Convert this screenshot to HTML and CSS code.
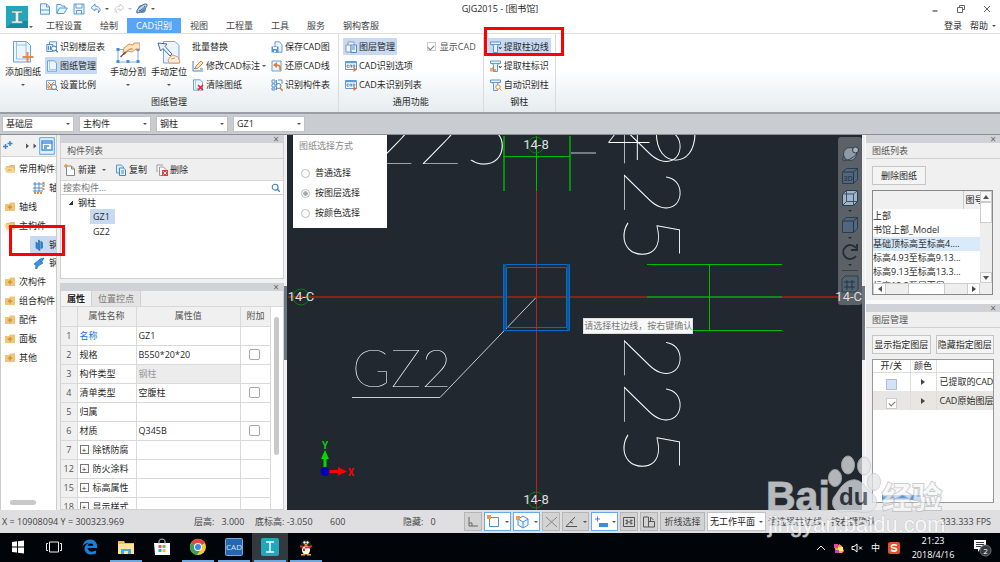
FILE: index.html
```html
<!DOCTYPE html>
<html lang="zh-CN">
<head>
<meta charset="utf-8">
<title>GJG2015 - [图书馆]</title>
<link rel="stylesheet" href="styles.css">
</head>
<body>
<svg class="defs" aria-hidden="true">
  <symbol id="folder" viewBox="0 0 12 10"><path d="M1 9V2h4l1-1.500h5V9z" fill="#f0c479"/><path d="M6 3v4.500M3.800 5.200h4.400" stroke="#c8922e" stroke-width="1.300"/></symbol>
  <symbol id="folder-open" viewBox="0 0 12 10"><path d="M2 8V2h3l1-1h5v7z" fill="#e9bd70"/><path d="M0 3.500h9L11 9H2.500z" fill="#f8d797"/><path d="M3.500 6h4" stroke="#d69e3f"/></symbol>
  <symbol id="cad" viewBox="0 0 12 12"><path d="M.5 1.500h11v8H.5z" fill="#fff" stroke="#5f9bd8"/><path d="M1 2.500h10" stroke="#5f9bd8" stroke-width="1.500"/><path d="M4 5.200H2v2h2M5 7.500V5h1.500v2.500M8 5h1.800v2.200H8z" fill="none" stroke="#3d76b5" stroke-width=".8"/><path d="M8.500 7.500 12 9.500 8.500 12z" fill="#e96a2e"/></symbol>
  <symbol id="column" viewBox="0 0 12 12"><path d="M.5 1h10v2.500H8V5h-.500v6.500H3.500V5H3V3.500H.5z" fill="#e7f2ff" stroke="#4c8dcf" stroke-width=".9"/><path d="M3 3.500h5" stroke="#4c8dcf" stroke-width=".8"/></symbol>
  <symbol id="sheet" viewBox="0 0 12 12"><path d="M1.500.8h6.800l2.200 2.400v8h-9z" fill="#edf5ff" stroke="#629bd5" stroke-width=".9"/><path d="M3.500 1v8.500h7" fill="none" stroke="#9bbfe3" stroke-width=".8"/></symbol>
  <symbol id="lens" viewBox="0 0 12 12"><circle cx="5" cy="5" r="3.500" fill="#fff" stroke="#3f83c8" stroke-width="1.300"/><path d="m7.500 7.500 3 3" stroke="#3f83c8" stroke-width="1.700"/></symbol>
  <symbol id="cube" viewBox="0 0 18 18"><path d="m1.500 5 4-3.500h11v11l-4 4h-11z" fill="#51677e" stroke="#2b3c4c"/><path d="M1.500 5h11v11.500M12.500 5l4-3.500" fill="none" stroke="#253747"/></symbol>
</svg>

<div class="app">
  <header class="top">
    <div class="logo"><svg viewBox="0 0 22 22"><path d="M0 0h22v22H0z" fill="#21a7bb"/><path d="m0 22 7-7h15v7z" fill="#168ca4"/><path d="M5.500 5v2h3.800v8H5.500v2.300h11V15h-3.800V7h3.800V5z" fill="#dff4f3" stroke="#73777c" stroke-width=".7"/></svg><i class="arrow"></i></div>
    <div class="titlerow">
      <div class="quick">
        <button aria-label="新建"><svg viewBox="0 0 12 12"><path d="M1.500.8h6l3 3v7.400h-9zM7.500 1v3h3M1.500 7h9" fill="#eaf4ff" stroke="#5b99d8"/></svg></button>
        <button aria-label="打开"><svg viewBox="0 0 12 12"><path d="M.8 10.500v-9h4l1 1.500h3v2h2.500L8 10.500zM1 10l2.500-5H9" fill="#eaf4ff" stroke="#5b99d8"/></svg></button>
        <button aria-label="保存"><svg viewBox="0 0 12 12"><path d="M1 1h10v10H1zM3 1v4h6V1M3.500 11V7.500h5V11" fill="#eaf4ff" stroke="#5b99d8"/></svg></button>
        <button aria-label="撤销"><svg viewBox="0 0 12 12"><path d="m5 1-4 3.800L5 8V6c3 0 4.500 1 3 4 3-2 3.500-6-3-7z" fill="#eaf4ff" stroke="#5b99d8"/></svg></button><i class="arrow"></i>
        <button aria-label="重做"><svg viewBox="0 0 12 12"><path d="m7 1 4 3.800L7 8V6c-3 0-4.500 1-3 4-3-2-3.500-6 3-7z" fill="#fff" stroke="#ccd0d5"/></svg></button><i class="arrow pale"></i>
        <button aria-label="视图"><svg viewBox="0 0 12 12"><circle cx="6" cy="6" r="4" fill="#648eb9"/><path d="M1 10C-1 6 9-1 11 1.500c1 2-5 8-10 8.500z" fill="#bad2e9" stroke="#3b658f"/><path d="M3 8c3-1 5-3 6-5" stroke="#315c88" fill="none"/></svg></button><i class="arrow"></i>
      </div>
      <h1>GJG2015 - [图书馆]</h1>
      <div class="winbtns">
        <button aria-label="最小化"><svg viewBox="0 0 8 8"><path d="M1.500 6h5" stroke="#555" stroke-width="1.300"/></svg></button>
        <button aria-label="还原"><svg viewBox="0 0 8 8"><path d="M2.500 2.500v-2h5v4h-2M.5 2.500h5v5h-5z" fill="none" stroke="#666"/></svg></button>
        <button aria-label="关闭"><svg viewBox="0 0 8 8"><path d="m1 1 6 6M7 1 1 7" stroke="#666"/></svg></button>
      </div>
    </div>
    <nav class="tabs">
      <button>工程设置</button><button>绘制</button><button class="on">CAD识别</button><button>视图</button><button>工程量</button><button>工具</button><button>服务</button><button>钢构客服</button>
      <span class="account"><a href="#">登录</a><a href="#">帮助</a><i class="arrow"></i></span>
    </nav>
  </header>

  <section class="ribbon">
    <div class="group">
      <div class="tools first">
        <button class="big"><svg viewBox="0 0 22 24"><path d="M1.500 1.500h13l4 4V22h-17z" fill="#edf5ff" stroke="#6aa0d8"/><path d="M4.500 2v17h14M14 2v17M4 5h11" fill="none" stroke="#9cc0e5"/><path d="M15.500 12v10M10.500 17h11" stroke="#e98a42" stroke-width="2"/></svg><span>添加图纸</span><i class="arrow"></i></button>
        <div class="stack">
          <button><svg viewBox="0 0 12 12"><path d="M3.500.8h7v8h-7z" fill="#edf5ff" stroke="#629bd5"/><path d="M.8 3.500h6v7h-6zM2.500 5v4M4.500 5v4" fill="#d9eaff" stroke="#5591d0"/><circle cx="8" cy="7.500" r="2.500" fill="#fff" stroke="#3c7fc5"/><path d="m9.800 9.300 2 2" stroke="#3c7fc5" stroke-width="1.400"/></svg>识别楼层表</button>
          <button class="on"><svg><use href="#sheet"/></svg>图纸管理</button>
          <button><svg viewBox="0 0 12 12"><path d="M.5 1.500h9v9h-9z" fill="#fff0e5" stroke="#71a5d7"/><path d="m2 9 6-6M2 3l3 3M2 5v4h4" stroke="#e47e39" fill="none"/><circle cx="8" cy="8" r="2.500" fill="#fff" stroke="#4484c3"/><path d="m10 10 2 2" stroke="#4484c3"/></svg>设置比例</button>
        </div>
        <button class="big"><svg viewBox="0 0 24 24"><path d="M2 9.500h20V22H2z" fill="none" stroke="#7fb0df"/><path d="M.5 8h3v3h-3zM20.500 8h3v3h-3zM.5 20h3v3h-3zM20.500 20h3v3h-3zM10.500 20h3v3h-3z" fill="#478ed5"/><path d="m7 12 1-4 5-4 4 1 1-2h6v6h-4l-4 3-4-1-4 4z" fill="#fbe3c8" stroke="#dd9150"/><path d="m8 13 6-4 3 0" fill="none" stroke="#c97f3c"/><path d="m4.500 17 5-5" stroke="#555" stroke-width="1.300"/></svg><span>手动分割</span><i class="arrow"></i></button>
        <button class="big"><svg viewBox="0 0 24 24"><path d="M6.500 1.500H18l4 4V23H6.500z" fill="#e9f4ff" stroke="#73a6dc"/><path d="m1 3 9 1-2 2.500 7 7.500-2 2-7-7.500L3.500 11z" fill="#e9f4ff" stroke="#416b9a"/><path d="m13 17 3-2 5 2 2 6H12l-1-3z" fill="#fff0e2" stroke="#e49a59"/><path d="m14 19 4-1" stroke="#e49a59"/></svg><span>手动定位</span><i class="arrow"></i></button>
        <div class="stack">
          <button>批量替换</button>
          <button><svg viewBox="0 0 12 12"><path d="M1 1v10h10M2 9l3-3 2 1 4-5M8 9h3" fill="none" stroke="#4388cc"/><path d="m4 6 5-5 2 2-5 5-3 1z" fill="#ffe5ca" stroke="#dd8339"/></svg>修改CAD标注<i class="arrow"></i></button>
          <button><svg viewBox="0 0 12 12"><use href="#sheet"/><path d="m6 6 5 5m0-5-5 5" stroke="#e22828" stroke-width="1.700"/></svg>清除图纸</button>
        </div>
        <div class="stack">
          <button><svg viewBox="0 0 12 12"><path d="M4 .8h4.500l2.500 3v7.400H4z" fill="#edf5ff" stroke="#629bd5"/><path d="M.5 5.500h7v6h-7z" fill="#4e94d9"/><path d="M2 6h4v2H2zM3 9.500h2v1.500H3z" fill="#fff"/></svg>保存CAD图</button>
          <button><svg viewBox="0 0 12 12"><path d="M1 1h9v10H1z" fill="#edf5ff" stroke="#6ba0d5"/><path d="M9 10c1-4-1-5-4-5" fill="none" stroke="#e77732" stroke-width="1.700"/><path d="M2 5 6 2v6z" fill="#e77732"/></svg>还原CAD线</button>
          <button><svg viewBox="0 0 12 12"><path d="M1 1h3v3H1zM1 5h3v3H1zM1 9h3v2H1zM5.500 1v10M7 1h4v4" fill="none" stroke="#5794d1"/><circle cx="7.500" cy="7" r="2.500" fill="#fff" stroke="#3c7fc5"/><path d="m9 9 3 3" stroke="#e77732" stroke-width="1.500"/></svg>识别构件表</button>
        </div>
      </div>
      <h2>图纸管理</h2>
    </div>
    <div class="group">
      <div class="tools">
        <div class="stack">
          <button class="on"><svg viewBox="0 0 12 12"><path d="M1 4h5v7H1zM3 4V1h6v3" fill="#f4f4f4" stroke="#899bb0"/><path d="M6 4h5.500v7.500H6zM7 6h3M7 8h3" fill="#e7f2ff" stroke="#4b90d5"/></svg>图层管理</button>
          <button><svg><use href="#cad"/></svg>CAD识别选项</button>
          <button><svg><use href="#cad"/></svg>CAD未识别列表</button>
        </div>
        <label class="check"><input type="checkbox" checked>显示CAD</label>
      </div>
      <h2>通用功能</h2>
    </div>
    <div class="group">
      <div class="tools">
        <div class="stack">
          <button class="on"><svg viewBox="0 0 12 12"><use href="#column"/><path d="m9 6 1.200 2L11.500 6" fill="none" stroke="#444"/></svg>提取柱边线</button>
          <button><svg viewBox="0 0 12 12"><use href="#column"/><path d="m9 6 1.200 2L11.500 6" fill="none" stroke="#444"/><path d="M1 11.500V8M3 11.500V7M5 11.500V9" stroke="#e07b31" stroke-width="1.300"/></svg>提取柱标识</button>
          <button><svg viewBox="0 0 12 12"><use href="#column"/><circle cx="8" cy="8" r="2.200" fill="#fff" stroke="#e38a44"/><path d="m9.500 9.500 2 2" stroke="#e38a44"/></svg>自动识别柱</button>
        </div>
      </div>
      <h2>钢柱</h2>
      <div class="redmark ribbonmark"></div>
    </div>
  </section>

  <div class="selectors">
    <span class="combo"><select aria-label="楼层"><option>基础层</option></select><i class="arrow"></i></span>
    <span class="combo"><select aria-label="构件类别"><option>主构件</option></select><i class="arrow"></i></span>
    <span class="combo"><select aria-label="构件类型"><option>钢柱</option></select><i class="arrow"></i></span>
    <span class="combo"><select aria-label="构件"><option>GZ1</option></select><i class="arrow"></i></span>
  </div>

  <main class="work">
    <aside class="nav">
      <div class="navtop">
        <svg viewBox="0 0 36 20"><path d="M2 10.500h5M4.500 8v5M6.500 7.500h5M9 5v5" stroke="#3f88cf" stroke-width="1.500"/><path d="m25 7.500 3 2.500-3 2.500z" fill="#555"/><path d="M32.500 7.500v5l3-2.500z" fill="#555"/></svg>
        <button aria-label="面板视图"><svg viewBox="0 0 16 18"><path d="M.7.700h14.600v16.600H.7z" fill="#e2f0ff" stroke="#5ba5ee"/><path d="M3 4h10v9H3zM3 6h10M5 9h5M5 11h3" fill="#fff" stroke="#3f91df" stroke-width="1.400"/></svg></button>
      </div>
      <ul>
        <li><svg><use href="#folder-open"/></svg>常用构件类型</li>
        <li class="sub"><svg viewBox="0 0 12 12"><path d="M2 0v10M6 0v10M0 2h12M0 6h10M0 9h10" stroke="#4b8dcc"/><path d="M10.500 0v9M1 11h9" stroke="#df8a48" stroke-width="2" stroke-dasharray="2 1"/></svg>轴网</li>
        <li><svg><use href="#folder"/></svg>轴线</li>
        <li><svg><use href="#folder-open"/></svg>主构件</li>
        <li class="sub on"><svg viewBox="0 0 12 12"><path d="m3 3 1.500 1v6L3 9zM5.500 1 7 2v9.500L5.500 11zM8 2.500l1.500 1V9L8 9.500z" fill="#378bd9" stroke="#236db2" stroke-width=".7"/></svg>钢柱</li>
        <li class="sub"><svg viewBox="0 0 12 12"><path d="m1 7 6-5 4-1-2 3.500H7.500L10 6l-5 3-1 2.500H2.500L3 8.500z" fill="#3695e7" stroke="#236db2" stroke-width=".7"/></svg>钢梁</li>
        <li><svg><use href="#folder"/></svg>次构件</li>
        <li><svg><use href="#folder"/></svg>组合构件</li>
        <li><svg><use href="#folder"/></svg>配件</li>
        <li><svg><use href="#folder"/></svg>面板</li>
        <li><svg><use href="#folder"/></svg>其他</li>
      </ul>
      <div class="hthumb"></div>
      <div class="redmark navmark"></div>
    </aside>

    <div class="side">
      <section class="panel">
        <div class="strip"><button aria-label="关闭">×</button></div>
        <h3>构件列表</h3>
        <div class="actions">
          <button><svg viewBox="0 0 12 12"><path d="M2.500 2h5l3 3v6.500h-8zM7.500 2v3h3" fill="#fff" stroke="#888"/><path d="M2 0v4M0 2h4" stroke="#e99842" stroke-width="1.300"/></svg>新建<i class="arrow"></i></button>
          <button><svg viewBox="0 0 12 12"><path d="M1.500 1h5l2 2v6h-7z" fill="#d8eaff" stroke="#5a98d5"/><path d="M4.500 4h4l2 2v5.500h-6zM6 7h3M6 9h3" fill="#edf6ff" stroke="#3f87cf"/></svg>复制</button>
          <button><svg viewBox="0 0 12 12"><path d="M1 8V1h6M3.500 3h4l3 3v5.500h-7z" fill="#fff" stroke="#999"/><path d="M6 6h6v6H6z" fill="#e0403f"/><path d="m7.500 7.500 3 3m0-3-3 3" stroke="#fff"/></svg>删除</button>
        </div>
        <div class="search"><input type="text" placeholder="搜索构件..." aria-label="搜索构件"><svg><use href="#lens"/></svg></div>
        <ul class="tree"><li><i class="open"></i>钢柱<ul><li><span class="on">GZ1</span></li><li><span>GZ2</span></li></ul></li></ul>
      </section>
      <section class="panel">
        <div class="strip"><button aria-label="关闭">×</button></div>
        <div class="proptabs"><button class="on">属性</button><button>位置控点</button></div>
        <div class="propbody">
          <table class="props">
            <colgroup><col class="c1"><col class="c2"><col><col class="c4"></colgroup>
            <thead><tr><th></th><th>属性名称</th><th>属性值</th><th>附加</th></tr></thead>
            <tbody>
              <tr><th>1</th><td class="blue">名称</td><td>GZ1</td><td></td></tr>
              <tr><th>2</th><td>规格</td><td>B550*20*20</td><td><input type="checkbox" aria-label="规格附加"></td></tr>
              <tr><th>3</th><td>构件类型</td><td class="locked">钢柱</td><td></td></tr>
              <tr><th>4</th><td>清单类型</td><td>空腹柱</td><td><input type="checkbox" aria-label="清单类型附加"></td></tr>
              <tr><th>5</th><td>归属</td><td></td><td></td></tr>
              <tr><th>6</th><td>材质</td><td>Q345B</td><td><input type="checkbox" aria-label="材质附加"></td></tr>
              <tr><th>7</th><td><button class="plus">+</button>除锈防腐</td><td></td><td></td></tr>
              <tr><th>12</th><td><button class="plus">+</button>防火涂料</td><td></td><td></td></tr>
              <tr><th>15</th><td><button class="plus">+</button>标高属性</td><td></td><td></td></tr>
              <tr><th>18</th><td><button class="plus">+</button>显示样式</td><td></td><td></td></tr>
            </tbody>
          </table>
          <div class="vthumb"></div>
        </div>
      </section>
    </div>
    <div class="splitter"><i></i></div>

    <section class="canvas">
      <svg class="drawing" viewBox="287 135 575 375" preserveAspectRatio="xMidYMid slice">
        <g class="cadbig">
          <text x="371" y="164">225</text>
          <text x="606" y="160">40</text>
          <text transform="translate(624 123) rotate(90)">225</text>
          <text transform="translate(624 335) rotate(90)">225</text>
          <text class="mid" x="352" y="387">GZ2</text>
        </g>
        <path class="line white" d="M570 153h26M352 397.500h88L536.500 297"/>
        <path class="line red wide-line" d="M288 297H862"/>
        <path class="line red" d="M536.500 190V510"/>
        <path class="line green wide-line" d="M504 136v55M570 136v55M647 297h135"/>
        <path class="line green" d="M536.500 136v55M503 156.500h67M647 264.500h135M647 330.500h135M709.500 264v66"/>
        <path class="line blue-edge" d="M503.500 264.500h66v66h-66zM506.500 267.500h60v60h-60z"/>
        <path class="line blue-side" d="M505 264v66M568 264v66"/>
        <g class="axis"><circle cx="536" cy="145" r="8"/><circle cx="301" cy="297" r="8"/><circle cx="848" cy="297" r="8"/><circle cx="536" cy="500" r="8"/></g>
        <g class="axistext"><text x="536" y="149">14-8</text><text x="301" y="301">14-C</text><text x="536" y="504">14-8</text></g>
        <path d="M325 471v-14" stroke="#00d900" stroke-width="3"/><path d="m321 459 4-9 4 9z" fill="#00d900"/><path d="M325 471.500h14" stroke="#f00" stroke-width="3"/><path d="m338 467 9 4.500-9 4z" fill="#f00"/><circle cx="325" cy="471.500" r="4.500" fill="#0000b5"/>
        <text class="ucs gy" x="325" y="449">Y</text><text class="ucs gx" x="351" y="476">X</text>
      </svg>
      <fieldset class="mode">
        <legend>图纸选择方式</legend>
        <label><input type="radio" name="mode">普通选择</label>
        <label><input type="radio" name="mode" checked>按图层选择</label>
        <label><input type="radio" name="mode">按颜色选择</label>
      </fieldset>
      <div class="hint">请选择柱边线，按右键确认</div>
      <div class="viewbar">
        <button aria-label="动态观察"><svg viewBox="0 0 18 18"><circle cx="9" cy="9" r="6.500" fill="#8d9aa7" stroke="#39434d"/><path d="M3 11C-1 16 3 17 9 14c6-3 10-8 7-10" fill="none" stroke="#39434d"/><circle cx="14.500" cy="5" r="3" fill="#a5b2bf" stroke="#303942"/></svg></button>
        <button aria-label="三维"><svg viewBox="0 0 18 18"><use href="#cube"/><text x="7" y="14" font-size="7" text-anchor="middle" fill="#1d2a37">3D</text></svg></button>
        <button aria-label="正面"><svg viewBox="0 0 18 18"><path d="m1.500 5 4-3.500h11v11l-4 4h-11z" fill="#9fb4c9" stroke="#2b3c4c"/><path d="M1.500 5h11v11.500M12.500 5l4-3.500M5.500 1.500v11h11M5.500 12.500l-4 4" fill="none" stroke="#3b5168"/></svg><i class="arrow"></i></button>
        <button aria-label="实体"><svg viewBox="0 0 18 18"><use href="#cube"/></svg><i class="arrow"></i></button>
        <button aria-label="旋转"><svg viewBox="0 0 18 18"><path d="M15 5a7 7 0 1 0 0 8M16 1v6h-6" fill="none" stroke="#252c33" stroke-width="1.800"/></svg><i class="arrow"></i></button>
        <hr>
        <button aria-label="网格"><svg viewBox="0 0 18 18"><path d="M1 4 4 1h13v13l-3 3H1z" fill="#526372" stroke="#303e49"/><path d="M3 7h11M3 12h11M6 5v10M11 5v10" stroke="#273440"/></svg></button>
      </div>
      <span class="edgelabel">14-C</span>
    </section>
    <div class="splitter"><i></i></div>

    <aside class="right">
      <section class="rpanel">
        <div class="strip"><button aria-label="关闭">×</button></div>
        <h3>图纸列表</h3>
        <div class="rbtns"><button>删除图纸</button></div>
        <div class="sheetbox">
          <table class="sheets">
            <thead><tr><th></th><th>图号</th></tr></thead>
            <tbody>
              <tr><td colspan="2">上部</td></tr>
              <tr><td colspan="2">书馆上部_Model</td></tr>
              <tr class="on"><td colspan="2">基础顶标高至标高4....</td></tr>
              <tr><td colspan="2">标高4.93至标高9.13...</td></tr>
              <tr><td colspan="2">标高9.13至标高13.3...</td></tr>
              <tr><td colspan="2">标高13.3至屋面层</td></tr>
            </tbody>
          </table>
          <div class="vbar"><button aria-label="向上"><i class="tri up"></i></button><b></b><span></span><button aria-label="向下"><i class="tri down"></i></button></div>
          <div class="hbar"><button aria-label="向左"><i class="tri left"></i></button><span></span><b></b><span></span><button aria-label="向右"><i class="tri rightward"></i></button></div>
        </div>
      </section>
      <section class="rpanel">
        <div class="strip"><button aria-label="关闭">×</button></div>
        <h3>图层管理</h3>
        <div class="rbtns"><button>显示指定图层</button><button>隐藏指定图层</button></div>
        <div class="layerbox">
          <table class="layers">
            <thead><tr><th>开/关</th><th>颜色</th><th></th></tr></thead>
            <tbody>
              <tr><td><input type="checkbox" class="tint" aria-label="已提取的CAD图层"></td><td><i class="tri rightward"></i></td><td>已提取的CAD图层</td></tr>
              <tr class="on"><td><input type="checkbox" checked aria-label="CAD原始图层"></td><td><i class="tri rightward"></i></td><td>CAD原始图层</td></tr>
            </tbody>
          </table>
          <div class="layerthumb"></div>
        </div>
      </section>
    </aside>
  </main>

  <footer class="status">
    <span>X = 10908094 Y = 300323.969</span><span>层高:&nbsp;&nbsp; 3.000</span><span>底标高: -3.050</span><span>600</span><span>隐藏:&nbsp;&nbsp; 0</span>
    <div class="snaps">
      <button aria-label="正交"><svg viewBox="0 0 16 16"><path d="M4 3v9h9M4 9h3v3" fill="none" stroke="#666"/></svg></button>
      <button class="on wide" aria-label="选择框"><svg viewBox="0 0 16 16"><path d="M3.500 3.500h9v9h-9z" fill="#fff" stroke="#4c91d5"/><path d="M1 1h4v4H1z" fill="#ed994f"/></svg><i class="arrow"></i></button>
      <button class="on wide" aria-label="三维捕捉"><svg viewBox="0 0 16 16"><path d="m3 5 5-3 5 3v6l-5 3-5-3zM3 5l5 3 5-3M8 8v6" fill="#eef6ff" stroke="#4c91d5"/><path d="M1 2h4v4H1z" fill="#ed994f"/></svg><i class="arrow"></i></button>
      <button aria-label="交点"><svg viewBox="0 0 16 16"><path d="m3 3 11 10M14 3 3 13" stroke="#888"/></svg></button>
      <button class="wide" aria-label="角度"><svg viewBox="0 0 16 16"><path d="M13 12.500H2L11 3M6 8l3 1" fill="none" stroke="#555"/></svg><i class="arrow"></i></button>
      <button class="on wide" aria-label="坐标输入"><svg viewBox="0 0 16 16"><path d="M2 5h5M4.500 2.500v5" stroke="#438bd3"/><path d="M6 9h9v4H6z" fill="#438bd3"/></svg><i class="arrow"></i></button>
      <button aria-label="轴网显示"><svg viewBox="0 0 16 16"><path d="M2.500 3.500h11v9h-11zM6 5.500v5M10 5.500v5M4.500 6.500h2M9.500 6.500h2M6 8h4M4.500 9.500h2M9.500 9.500h2" fill="none" stroke="#555"/></svg></button>
      <button aria-label="翻转"><svg viewBox="0 0 16 16"><path d="M2.500 3h5v10h-5zM7.500 7.500h6V13h-6M9.500 7V3l3 3" fill="none" stroke="#555"/></svg></button>
      <button class="word">折线选择</button>
      <span class="combo"><select aria-label="工作平面"><option>无工作平面</option></select><i class="arrow"></i></span>
    </div>
    <span class="prompt">请选择柱边线，按右键确认</span>
    <span class="fps">333.333 FPS</span>
  </footer>

  <footer class="taskbar">
    <button aria-label="开始"><svg viewBox="0 0 18 18"><path d="m3 4 5-.7v5.200H3zM9 3.200l6-.8v6.100H9zM3 9.500h5v5L3 14zM9 9.500h6v6l-6-.8z" fill="#fff"/></svg></button>
    <button aria-label="任务视图"><svg viewBox="0 0 18 18"><path d="M4.500 4h9v10h-9zM3 5.500H1.500v7H3M15 5.500h1.500v7H15" fill="none" stroke="#eee"/></svg></button>
    <button aria-label="Edge"><svg viewBox="0 0 18 18"><path d="M1.500 9C2 4 5.500 1 9.500 1.500c5 .4 7 4 6.800 8.500H6.500c.5 4 5 4.500 8.500 2.500v3C9 18 4 16 3.500 11 3.500 8 5 6 8 5 4 5 2.500 7 1.500 9z" fill="#1682dc"/><path d="M6.700 7.800c.3-3 5.500-3.300 5.700 0z" fill="#02050a"/></svg></button>
    <button class="run" aria-label="文件资源管理器"><svg viewBox="0 0 18 18"><path d="M1 3h6l1 2h9v11H1z" fill="#ebbe57"/><path d="M1 6h16v10H1z" fill="#ffe399"/><path d="M4 16v-5h10v5h-3v-3H7v3z" fill="#49a9dd"/></svg></button>
    <button aria-label="应用商店"><svg viewBox="0 0 18 18"><path d="M1 5h16v12H2z" fill="#fff"/><path d="M6 6V3c0-2.500 6-2.500 6 0v3" fill="none" stroke="#ccc"/><path d="M5.500 7h3v3h-3z" fill="#e54"/><path d="M9.500 7h3v3h-3z" fill="#7b3"/><path d="M5.500 11h3v3h-3z" fill="#2ae"/><path d="M9.500 11h3v3h-3z" fill="#fb2"/></svg></button>
    <button class="run" aria-label="Chrome"><svg viewBox="0 0 18 18"><circle cx="9" cy="9" r="8" fill="#f5ca32"/><path d="M9 9 2 5a8 8 0 0 1 14 0z" fill="#e14b3d"/><path d="M9 9 2 5a8 8 0 0 0 6 12l4-6z" fill="#3da350"/><circle cx="9" cy="9" r="4" fill="#fff"/><circle cx="9" cy="9" r="3" fill="#4385e5"/></svg></button>
    <button class="run" aria-label="广联达CAD"><svg viewBox="0 0 18 18"><rect x=".5" y=".5" width="17" height="17" rx="1" fill="#2467ad" stroke="#75a9df"/><text x="9" y="12" font-size="8" text-anchor="middle" fill="#cde6ff">CAD</text></svg></button>
    <button class="run current" aria-label="GJG2015"><svg viewBox="0 0 18 18"><rect width="18" height="18" rx="2" fill="#22a6ba"/><path d="M5 4h8M9 4v10M5 14h8" stroke="#e7ffff" stroke-width="1.500"/></svg></button>
    <button class="run" aria-label="QQ"><svg viewBox="0 0 18 18"><ellipse cx="9" cy="10" rx="5" ry="6" fill="#222"/><ellipse cx="9" cy="12" rx="4" ry="4.500" fill="#fff"/><path d="M4 7C3 0 15 0 14 7z" fill="#222"/><circle cx="7.500" cy="4.500" r="1.200" fill="#fff"/><circle cx="10.500" cy="4.500" r="1.200" fill="#fff"/><path d="M3 7c4 2 8 2 12 0v2c-4 2-8 2-12 0zM6 9v4h2V9" fill="#e32d28"/><path d="M7 6h4l-2 1.500zM4 16h4v1.500H4zM10 16h4v1.500h-4z" fill="#f4a526"/></svg></button>
    <div class="tray">
      <svg viewBox="0 0 12 12"><path d="m2 8 4-4 4 4" fill="none" stroke="#fff"/></svg>
      <svg viewBox="0 0 12 12"><path d="m1 3 4 1 1-2 3 2 2 5-2 2H3z" fill="#f4a441"/><path d="M1 2h4v4H1z" fill="#e8498a"/><path d="M5 5h5v4H5z" fill="#ffe680"/><path d="M2 8h4v3H2z" fill="#bd42c3"/></svg>
      <svg viewBox="0 0 12 12"><path d="M1 4.500h2L6 2v8L3 7.500H1zM8 4.500l3 3m0-3-3 3" fill="none" stroke="#fff"/></svg>
      <span>中</span>
      <svg viewBox="0 0 12 12"><rect width="12" height="12" rx="2" fill="#eb4e25"/><path d="M9 3.500C6 2 3 3 3.500 5c.5 1.500 5 .5 5 2.500C8.500 9.500 5 9.500 3 8" fill="none" stroke="#fff" stroke-width="1.700"/></svg>
    </div>
    <time>21:23<br>2018/4/16</time>
    <button class="notice" aria-label="通知"><svg viewBox="0 0 20 20"><path d="M2 3h12v9H8l-2 3v-3H2z" fill="#fff"/><path d="M4 5.500h8M4 7.500h8M4 9.500h5" stroke="#333"/><circle cx="13.500" cy="13.500" r="5.500" fill="#343a40" stroke="#777"/><text x="13.500" y="16.500" text-anchor="middle" font-size="8" fill="#fff">2</text></svg></button>
  </footer>

  <div class="watermark">
    <svg viewBox="0 0 186 104">
      <text class="wmlatin" x="-2" y="76">Bai</text>
      <g class="paw">
        <ellipse cx="67" cy="44" rx="6.500" ry="8.500"/><ellipse cx="80" cy="31" rx="6.500" ry="9"/><ellipse cx="96" cy="32" rx="6.500" ry="9"/><ellipse cx="106" cy="48" rx="6.500" ry="8.500"/>
        <path d="M84 46c10-2 13 9 20 13 8 7 5 18-4 19-8 1-17-2-24 0-10 1-14-8-10-15 5-6 8-15 18-17z"/>
      </g>
      <text class="wmdu" x="71" y="71">du</text>
      <text class="wmcjk" x="114" y="74">经验</text>
      <text class="wmurl" x="0" y="98">jingyan.baidu.com</text>
    </svg>
  </div>
</div>
</body>
</html>
```
FILE: styles.css
```css
* { box-sizing: border-box; }
body { margin: 0; font: 9px/12px "Open Sans", "Noto Sans CJK SC", sans-serif; color: #292929; }
button, input, select { font: inherit; color: inherit; margin: 0; }
button { border: 0; padding: 0; background: none; white-space: nowrap; display: flex; align-items: center; }
svg { display: block; flex: none; width: 12px; height: 12px; }
h1, h2, h3, ul { margin: 0; padding: 0; font-size: 9px; font-weight: 400; list-style: none; }
a { color: inherit; text-decoration: none; }
table { border-collapse: collapse; table-layout: fixed; width: 100%; }
th { font-weight: 400; }
th, td { padding: 0; white-space: nowrap; overflow: hidden; }
.defs { position: absolute; width: 0; height: 0; }
.app { position: relative; display: flex; flex-direction: column; height: 100vh; overflow: hidden; background: #f0f0f0; }
.arrow { flex: none; width: 0; height: 0; border: 2px solid transparent; border-top-color: #555; border-bottom: 0; }
.pale { border-top-color: #bbb; }

.top { display: grid; grid-template-columns: 37px 1fr; grid-template-rows: 18px 15px; background: #fff; flex: none; }
.logo { grid-row: 1 / 3; display: flex; align-items: flex-end; gap: 1px; padding: 0 0 5px 6px; }
.logo svg { width: 22px; height: 22px; }
.titlerow { display: grid; grid-template-columns: 1fr auto 1fr; align-items: center; }
.titlerow h1 { margin-right: 37px; }
.quick { display: flex; align-items: center; gap: 5px; padding-left: 2px; }
.quick .arrow { margin: 0 -1px 0 -2px; }
.winbtns { display: flex; justify-content: flex-end; gap: 18px; padding-right: 9px; }
.winbtns svg { width: 8px; height: 8px; }
.tabs { display: flex; }
.tabs button { padding: 0 9px; color: #444; }
.tabs button.on { background: #57a5f5; color: #fff; }
.account { margin-left: auto; display: flex; align-items: center; gap: 8px; padding-right: 4px; }
.account .arrow { margin-left: -4px; }

.ribbon { display: flex; flex: none; height: 81px; border-top: 1px solid #ddd; border-bottom: 2px solid #989ea3; background: linear-gradient(#fff 45%, #e6ecef); }
.group { position: relative; padding: 3px 4px 0; border-right: 1px solid #d9dcdf; }
.group h2 { text-align: center; line-height: 16px; }
.tools { display: flex; gap: 3px; }
.first { padding-right: 3px; }
.big { flex-direction: column; padding: 3px 0 0; width: 38px; }
.big svg { width: 24px; height: 24px; }
.big span { line-height: 16px; }
.big .arrow { margin-top: 4px; }
.stack { display: grid; grid-template-rows: repeat(3, 19px); align-items: center; justify-items: start; }
.stack button { gap: 2px; height: 17px; padding: 0 2px; }
.first .stack button { padding: 0 1px; }
.on { background: #c7daf1; }
.check { display: flex; align-items: center; gap: 4px; height: 19px; margin-right: 3px; color: #555; }
input[type=checkbox] { appearance: none; width: 11px; height: 11px; border: 1px solid #a8a8a8; background: #fff; display: grid; place-items: center; }
input[type=checkbox]:checked::before { content: ""; width: 5px; height: 3px; border: solid #777; border-width: 0 0 1px 1px; transform: rotate(-45deg); }
.check input[type=checkbox] { width: 9px; height: 9px; border-color: #ccc; }
.redmark { position: absolute; border: 3px solid #f00; pointer-events: none; z-index: 4; }
.ribbonmark { left: 0; right: -9px; top: -7px; height: 29px; }

.selectors { display: flex; flex: none; gap: 5px; height: 21px; padding: 2px; background: #c9ccd1; border-bottom: 1px solid #8c9095; }
.combo { display: grid; width: 72px; align-items: center; }
.combo select { grid-area: 1 / 1; appearance: none; width: 100%; height: 16px; padding: 0 3px; border: 1px solid #c0c3c8; border-radius: 0; background: #fff; line-height: 12px; }
.combo .arrow { grid-area: 1 / 1; justify-self: end; margin-right: 4px; pointer-events: none; }

.work { flex: 1; min-height: 0; display: grid; grid-template-columns: 57px 227px 3px minmax(0, 1fr) 3px 135px; grid-template-rows: minmax(0, 1fr); }
.nav { position: relative; display: flex; flex-direction: column; background: #fff; border: solid #ccc; border-width: 0 1px; min-height: 0; }
.navtop { display: flex; align-items: center; justify-content: space-between; height: 22px; flex: none; background: #f1f1f1; border-bottom: 1px solid #d4d4d4; padding-right: 1px; }
.navtop > svg { width: 36px; height: 20px; }
.navtop button svg { width: 16px; height: 18px; }
.nav ul { flex: 1; overflow: hidden; padding-top: 2px; }
.nav li { display: flex; align-items: center; gap: 3px; height: 19px; padding-left: 3px; white-space: nowrap; overflow: hidden; }
.nav .sub { margin: 1px 0 1px 29px; height: 17px; gap: 4px; }
.hthumb { width: 26px; height: 5px; margin: 0 0 5px 9px; border-radius: 3px; background: #c8c8c8; }
.navmark { left: 8px; width: 56px; top: 90px; height: 31px; }

.side { display: grid; grid-template-rows: minmax(0, 144fr) minmax(0, 227fr); gap: 4px; padding-left: 3px; background: #f0f0f0; }
.panel { display: flex; flex-direction: column; overflow: hidden; background: #fff; border: 1px solid #d0d0d0; border-top: 0; }
.strip { display: flex; justify-content: flex-end; height: 8px; flex: none; background: #d1d2d7; }
.strip button { font-size: 10px; line-height: 8px; padding-right: 4px; color: #666; }
h3 { flex: none; height: 16px; line-height: 16px; padding-left: 6px; color: #555; background: #efefef; border-bottom: 1px solid #d0d0d0; }
.actions { display: flex; flex: none; gap: 9px; height: 22px; padding-left: 3px; background: #efefef; border-bottom: 1px solid #d8d8d8; }
.actions button { gap: 2px; }
.actions .arrow { margin-left: 4px; }
.search { display: flex; align-items: center; flex: none; height: 14px; border-bottom: 1px solid #d0d0d0; padding-right: 2px; }
.search input { flex: 1; min-width: 0; height: 12px; padding: 0 2px; border: 0; background: none; }
.search input::placeholder { color: #777; }
.search svg { width: 10px; height: 10px; }
.tree { padding: 2px 0 0 7px; line-height: 12px; }
.open { display: inline-block; width: 5px; height: 5px; margin: 0 5px 1px 0; background: linear-gradient(135deg, transparent 50%, #333 50%); }
.tree ul { padding-left: 22px; }
.tree li li { line-height: 15px; }
.tree span { display: inline-block; padding: 0 5px 0 3px; }

.proptabs { display: flex; flex: none; height: 16px; background: #efefef; border-bottom: 1px solid #d8d8d8; }
.proptabs button { padding: 0 6px; color: #777; background: #e4e4e4; border-right: 1px solid #d0d0d0; }
.proptabs .on { background: #f4f4f4; color: #222; font-weight: 700; }
.propbody { display: flex; min-height: 0; overflow: hidden; }
.props { flex: 1; width: 0; align-self: flex-start; }
.c1 { width: 16px; } .c2 { width: 59px; } .c4 { width: 30px; }
.props tr { height: 19px; }
.props th, .props td { border: solid #d9d9d9; border-width: 0 1px 1px 0; height: 19px; }
.props th { background: #f0f0f0; color: #555; }
.props td { padding-left: 2px; }
.props td:nth-child(4) { padding: 0 8px; }
.props td input { border-radius: 2px; }
.props .blue { color: #1672dd; }
.props .locked { background: #ececec; color: #999; }
.plus { display: inline-grid; place-items: center; width: 9px; height: 9px; margin-right: 4px; border: 1px solid #777; line-height: 7px; font-size: 8px; }
.vthumb { width: 5px; height: 138px; margin: 10px 4px 0 3px; border-radius: 3px; background: #c9c9c9; }

.splitter { display: grid; align-items: center; background: #f0f0f0; }
.splitter i { height: 74px; background: #6d7680; }

.canvas { position: relative; overflow: hidden; background: #212830; }
.drawing { width: 100%; height: 100%; }
.cadbig { font-family: Lato, sans-serif; font-weight: 100; font-size: 80px; fill: #fff; }
.cadbig .mid { font-size: 52px; }
.line { fill: none; }
.white { stroke: #c9ccd0; }
.red { stroke: #b5231c; }
.green { stroke: #0b0; }
.wide-line { stroke-width: 2px; }
.red.wide-line { stroke: #86241c; }
.green.wide-line { stroke: #0a8c12; }
.blue-edge { stroke: #0869c8; }
.blue-side { stroke-width: 2px; stroke: #0757a5; }
.axis { fill: none; stroke: #087d16; }
.axistext { font: 13px Roboto, sans-serif; fill: #ddd; text-anchor: middle; }
.ucs { font: 700 10px Roboto, sans-serif; text-anchor: middle; }
.gy { fill: #00d900; }
.gx { fill: #f00; }
.mode { position: absolute; left: 6px; top: 0; width: 94px; margin: 0; padding: 5px 6px 5px; border: 0; background: #fff; }
.mode legend { float: left; width: 100%; padding: 0; line-height: 12px; color: #888; margin-bottom: 11px; }
.mode label { display: flex; clear: both; align-items: center; gap: 5px; height: 20px; padding-left: 2px; }
.mode input { appearance: none; width: 9px; height: 9px; border: 1px solid #bbb; border-radius: 50%; background: #fff; }
.mode input:checked { background: radial-gradient(#aaa 40%, #fff 50%); }
.hint { position: absolute; left: 51.5%; top: 183px; padding: 1px 0; background: #f8f8f8; border: 1px solid #ddd; color: #777; white-space: nowrap; }
.viewbar { position: absolute; right: 0; top: 2px; width: 24px; display: flex; flex-direction: column; align-items: center; gap: 4px; height: 168px; padding: 8px 0 0; background: #5c6167; border-radius: 3px; }
.viewbar button { flex-direction: column; gap: 3px; }
.viewbar svg { width: 18px; height: 18px; }
.viewbar .arrow { border-top-color: #252b30; }
.viewbar hr { width: 16px; margin: 0; border: 0; border-top: 1px solid #3d4145; }
.edgelabel { position: absolute; right: 0; top: 155px; font: 13px/14px Roboto, sans-serif; color: #ddd; }

.right { display: grid; grid-template-rows: minmax(0, 165fr) minmax(0, 206fr); gap: 4px; padding-left: 1px; background: #fafafa; }
.rpanel { display: flex; flex-direction: column; overflow: hidden; background: #f0f0f0; }
.rbtns { display: flex; flex: none; gap: 5px; padding: 7px 6px 5px; }
.rbtns button { justify-content: center; flex: 0 1 auto; min-width: 54px; height: 19px; padding: 0 2px; border: 1px solid #c5c5c5; background: #f4f4f4; }
.sheetbox { display: grid; grid-template-columns: 1fr 12px; grid-template-rows: 1fr 11px; margin: 0 7px 5px 6px; border: 1px solid #888; height: 105px; overflow: hidden; background: #eee; }
.sheets { overflow: hidden; height: 92px; display: block; background: #fff; }
.sheets thead, .sheets tbody { display: table; width: 108px; table-layout: fixed; }
.sheets th { height: 18px; background: #f0f0f0; }
.sheets th:last-child { width: 18px; border-left: 1px solid #ccc; padding-left: 2px; }
.sheets td { height: 14px; line-height: 14px; }
.sheets .on { background: #d9eafa; }
.vbar { display: flex; flex-direction: column; }
.vbar button { justify-content: center; height: 11px; border: 1px solid #ccc; background: #f8f8f8; }
.vbar b { height: 21px; background: #fff; border: 1px solid #ccc; }
.vbar span, .hbar span { flex: 1; }
.hbar { display: flex; border-top: 1px solid #ccc; }
.hbar button { width: 13px; justify-content: center; background: #fff; border: 1px solid #ccc; border-width: 0 1px; }
.hbar b { width: 37px; background: #fff; border: solid #ccc; border-width: 0 1px; }
.tri { display: inline-block; width: 0; height: 0; border: 3px solid transparent; }
.up { border-bottom: 4px solid #555; border-top: 0; }
.down { border-top: 4px solid #555; border-bottom: 0; }
.left { border-right: 4px solid #555; border-left: 0; }
.rightward { border-left: 4px solid #444; border-right: 0; }
.layerbox { display: flex; flex-direction: column; flex: 1; margin: 0 6px 7px; border: 1px solid #999; background: #fff; overflow: hidden; }
.layers { background: #fff; }
.layers th { height: 12px; line-height: 11px; border-bottom: 1px solid #ddd; }
.layers th:nth-child(1) { width: 37px; }
.layers th:nth-child(2) { width: 26px; }
.layers th + th, .layers td + td { border-left: 1px solid #ddd; }
.layers td { height: 19px; text-align: center; }
.layers td:first-child { padding: 5px 13px 0; }
.layers td:last-child { text-align: left; padding-left: 3px; }
.layers .on { background: #e8e6e2; }
.layers input { border-color: #ccc; }
.layers .tint { background: #d5e1f4; border-color: #aabfdd; }
.layerthumb { margin: auto 0 2px 9px; width: 39px; height: 5px; background: #4f91dd; }

.status { display: grid; grid-template-columns: 192px 61px 75px 73px 61px auto auto 1fr; align-items: center; flex: none; height: 23px; padding-left: 2px; background: #dfdfe1; white-space: nowrap; color: #444; }
.snaps { display: flex; gap: 2px; }
.snaps button { justify-content: center; width: 18px; height: 19px; border: 1px solid #b5b5b5; background: #d3d3d4; }
.snaps svg { width: 16px; height: 16px; }
.snaps .wide { width: 27px; gap: 3px; }
.snaps .on { border-color: #67a9ef; background: #fff; }
.snaps .word { width: 45px; }
.snaps .combo { width: 59px; }
.snaps .combo select { height: 19px; padding: 0 2px; color: #222; }
.snaps .combo .arrow { margin-right: 3px; }
.prompt { padding-left: 2px; }
.fps { justify-self: end; padding-right: 9px; }

.taskbar { display: flex; align-items: center; flex: none; height: 29px; background: #010408; color: #fff; }
.taskbar > button { justify-content: center; width: 36px; height: 29px; border-bottom: 2px solid transparent; }
.taskbar svg { width: 18px; height: 18px; }
.taskbar .run { border-image: linear-gradient(90deg, transparent 10%, #6da7df 10% 90%, transparent 90%) 2; }
.taskbar .current { background: #34393e; }
.taskbar .tray { display: flex; align-items: center; gap: 6px; margin-left: auto; }
.taskbar .tray svg { width: 12px; height: 12px; }
.tray span { padding: 0 2px; }
time { width: 66px; text-align: center; line-height: 14px; }
.taskbar > .notice { width: 32px; margin-right: 2px; }
.taskbar .notice svg { width: 20px; height: 20px; }

.watermark { position: absolute; right: 46px; bottom: 24px; pointer-events: none; }
.watermark svg { width: 186px; height: 104px; overflow: visible; opacity: .75; }
.wmlatin { font: 700 41px "Liberation Sans", sans-serif; fill: #e9ebed; stroke: #c4c7ca; stroke-width: 1px; paint-order: stroke; }
.paw { fill: #e3e5e8; stroke: #c4c7ca; }
.wmcjk { font: 700 30px "Noto Sans CJK SC", sans-serif; fill: #f6f6f6; stroke: #b9bcc0; stroke-width: 2px; paint-order: stroke; }
.wmurl { font: 22px "Liberation Sans", sans-serif; fill: #fff; stroke: #c2c4c8; stroke-width: 1px; paint-order: stroke; }
.wmdu { font: 700 24px "Liberation Sans", sans-serif; fill: #303840; }
```
